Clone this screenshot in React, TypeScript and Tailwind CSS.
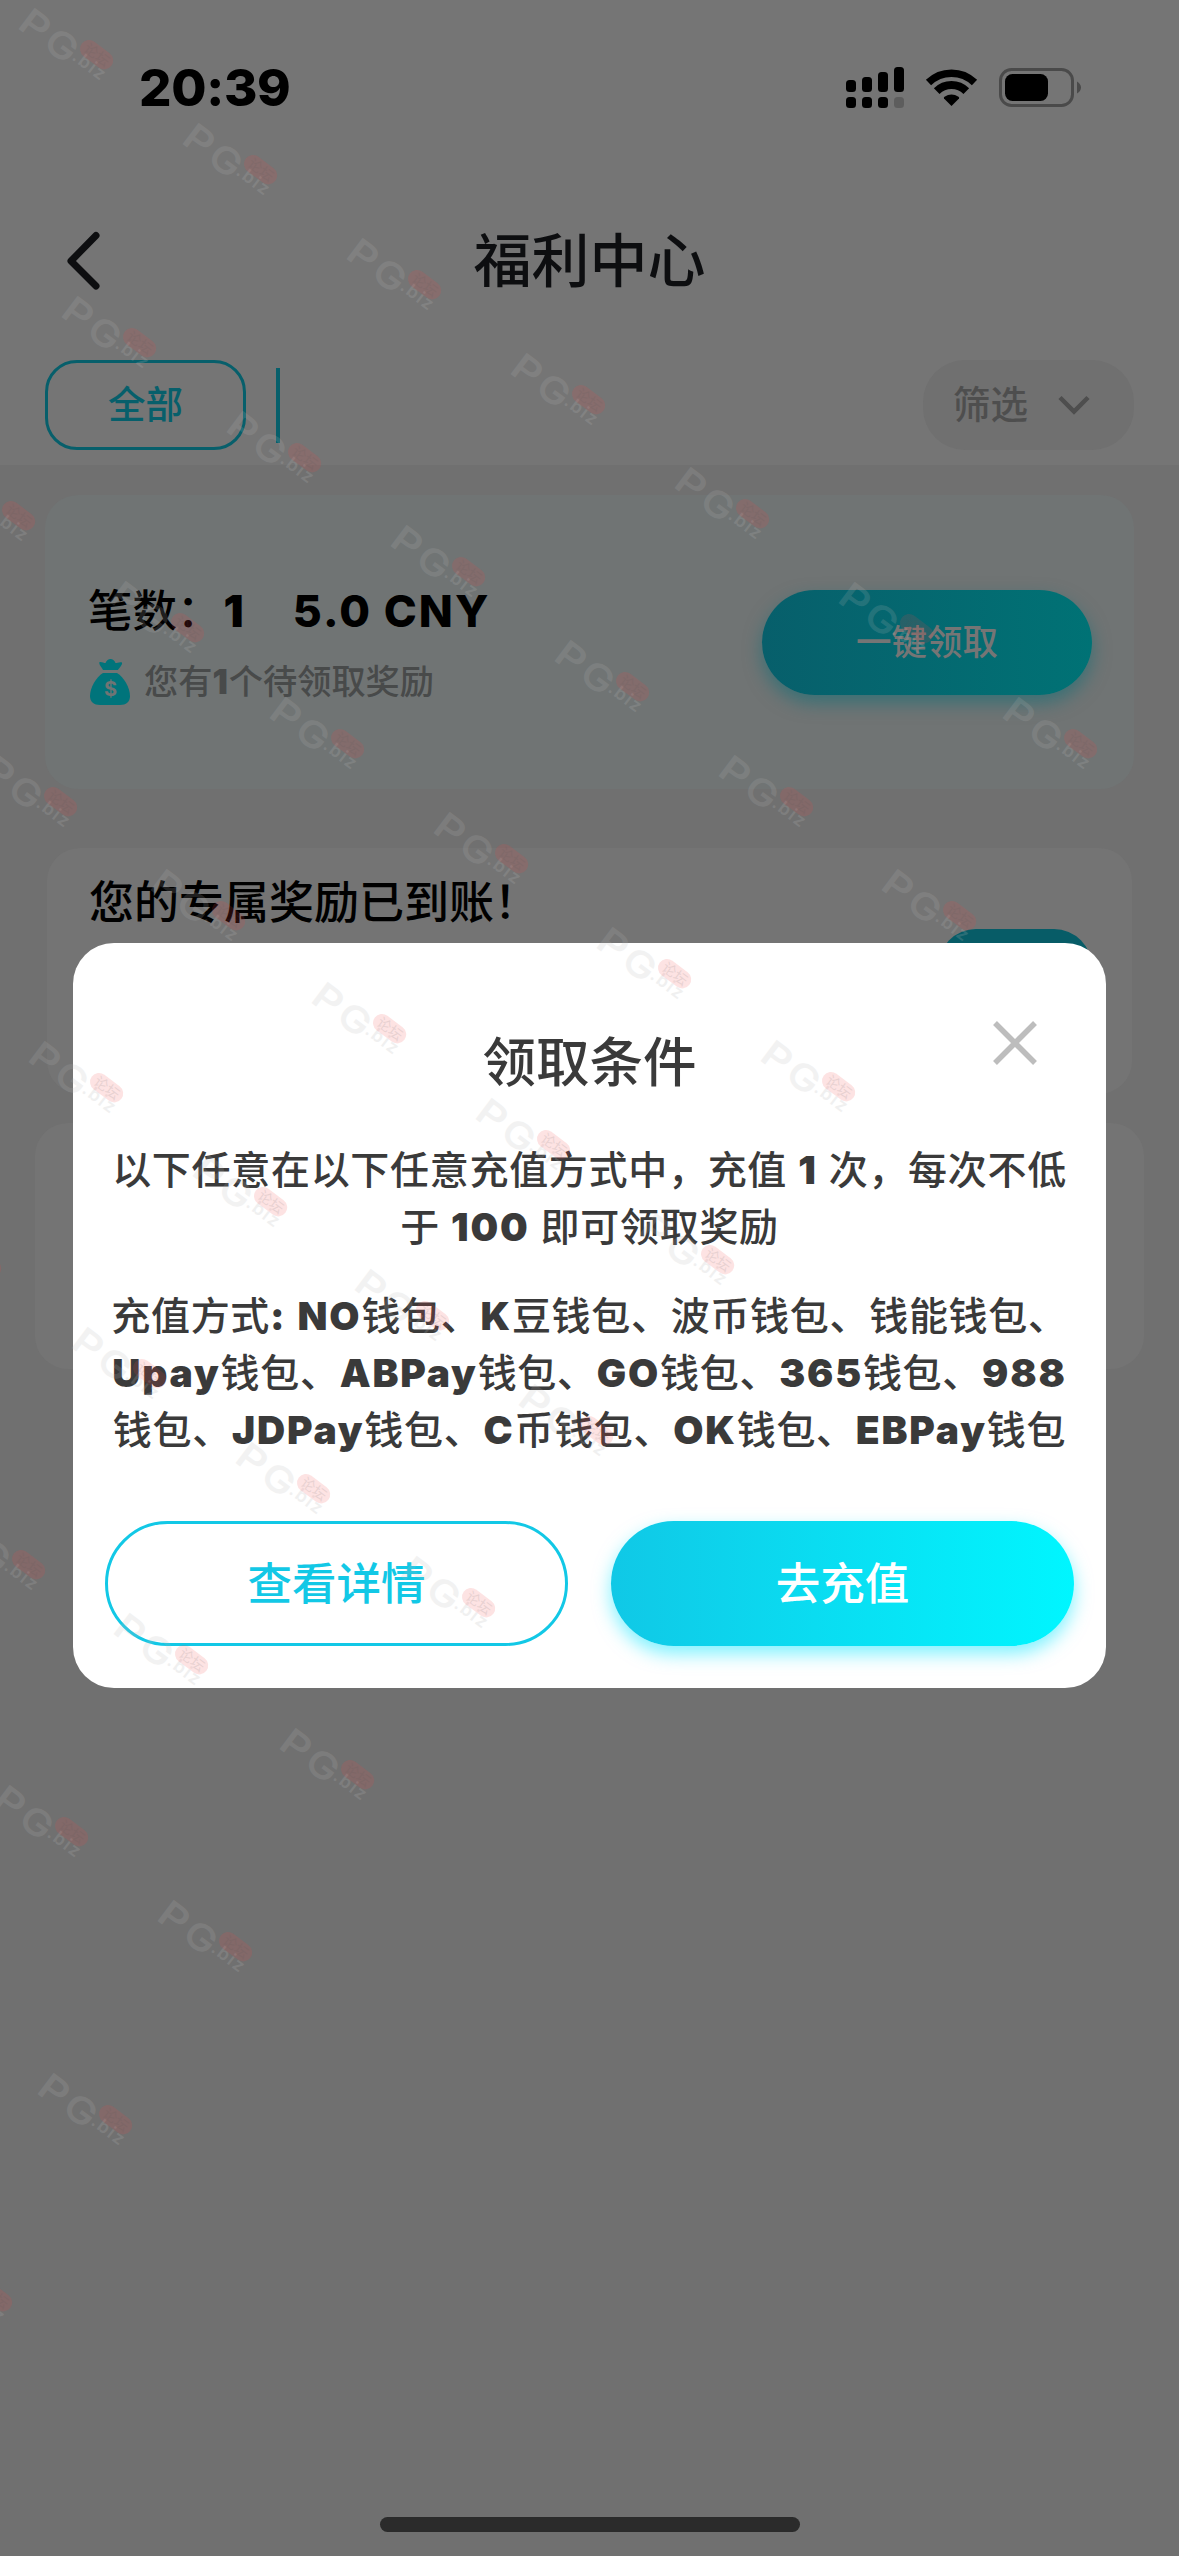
import { Fragment } from 'react';

const WATERMARKS: [number, number][] = [
  [18, 5], [182, 120], [346, 235], [510, 350], [674, 464], [838, 579], [1002, 694],
  [61, 293], [226, 408], [390, 522], [554, 637], [718, 752], [881, 866],
  [-60, 466], [109, 578], [269, 694], [433, 809], [596, 924], [760, 1037],
  [-18, 752], [150, 866], [311, 979], [475, 1095], [639, 1210],
  [28, 1038], [192, 1152], [354, 1266], [518, 1381],
  [-94, 1213], [71, 1324], [235, 1439], [400, 1553],
  [-50, 1515], [113, 1610], [279, 1725],
  [-7, 1782], [157, 1897], [37, 2070], [-83, 2247],
];

const CONDITION_LINES = [
  '以下任意在以下任意充值方式中，充值 1 次，每次不低',
  '于 100 即可领取奖励',
];

const METHOD_LINES = [
  '充值方式: NO钱包、K豆钱包、波币钱包、钱能钱包、',
  'Upay钱包、ABPay钱包、GO钱包、365钱包、988',
  '钱包、JDPay钱包、C币钱包、OK钱包、EBPay钱包',
];

// latin runs are heavier and wider than the CJK text around them
function Mixed({ text }: { text: string }) {
  return (
    <>
      {text.split(/([A-Za-z0-9:.]+)/).map((part, i) =>
        i % 2 ? (
          <span key={i} className="font-black tracking-[1.8px]">{part}</span>
        ) : (
          <Fragment key={i}>{part}</Fragment>
        )
      )}
    </>
  );
}

function StatusBar() {
  return (
    <div className="flex h-[176px] shrink-0 justify-between pl-[139px] pr-[98px]">
      <div className="pt-[57px] text-[51px] leading-[62px] font-extrabold tracking-[-.3px] text-black">20:39</div>
      <svg className="mt-[60px] h-[54px] w-[242px]" viewBox="0 0 242 54">
        <rect x="7" y="20" width="10" height="12" rx="3.5" />
        <rect x="23" y="17" width="10" height="15" rx="3.5" />
        <rect x="39" y="12" width="10" height="20" rx="3.5" />
        <rect x="55" y="7" width="10" height="25" rx="3.5" />
        <rect x="7" y="37" width="10" height="11" rx="3.5" />
        <rect x="23" y="37" width="10" height="11" rx="3.5" />
        <rect x="39" y="37" width="10" height="11" rx="3.5" />
        <rect x="55" y="37" width="10" height="11" rx="3.5" opacity=".2" />
        <path d="M89.5 22.5A33 33 0 0 1 135.5 22.5" fill="none" stroke="#000" strokeWidth="7.5" />
        <path d="M97.7 31.2A21 21 0 0 1 127.3 31.2" fill="none" stroke="#000" strokeWidth="8" />
        <path d="M112.5 46L105 38.5Q104.5 37.5 105.5 36.8Q112.5 32 119.5 36.8Q120.5 37.5 120 38.5Z" />
        <rect x="161.5" y="9.5" width="72" height="36" rx="11" fill="none" stroke="#4a4a4a" strokeWidth="3" />
        <rect x="166" y="14" width="43" height="27" rx="7.5" />
        <path d="M238 21.5C240.5 23 242 25 242 27.5S240.5 32 238 33.5Z" fill="#4a4a4a" />
      </svg>
    </div>
  );
}

function MoneyBag() {
  return (
    <svg className="h-[47px] w-[40px]" viewBox="0 0 40 47" fill="#00747b">
      <path d="M9.5 3C11.5 2.5 14 4 15.5 4C16.5 1.5 18.5 0 20.5 0S24.5 1.5 25.5 4C27 4 30 2.5 32 3.5C32.5 6 29.5 8.5 28 11H13C12 8.5 8.5 5.5 9.5 3Z" />
      <path d="M13 14H27C34 18 40 29 40 37C40 43 36 46 30 46H10C4 46 0 43 0 37C0 29 6 18 13 14Z" />
      <text x="20.5" y="37" textAnchor="middle" fontSize="20" fontWeight="700" fill="#707474">$</text>
    </svg>
  );
}

function Watermark({ x, y }: { x: number; y: number }) {
  return (
    <svg className="absolute h-[100px] w-[110px] overflow-visible" style={{ left: x, top: y }} viewBox="0 0 110 100">
      <g transform="translate(0 23) rotate(37)" fill="#b8b8b8" stroke="#b8b8b8" strokeWidth="1.2" opacity=".17" fontSize="35" fontWeight="400">
        <text x="-2" y="0" textLength="28" lengthAdjust="spacingAndGlyphs">P</text>
        <text x="30" y="0" textLength="31" lengthAdjust="spacingAndGlyphs">G</text>
      </g>
      <text transform="translate(53 54) rotate(37)" fill="#b8b8b8" opacity=".2" fontSize="18" fontWeight="600" letterSpacing="1.5">.biz</text>
      <g transform="translate(79 50) rotate(37)">
        <rect x="-19" y="-9" width="37" height="18" rx="9" fill="#f04646" opacity=".15" />
        <text x="0" y="5" textAnchor="middle" fontSize="14" fontWeight="400" fill="#555" opacity=".12">论坛</text>
      </g>
    </svg>
  );
}

function ConditionModal() {
  return (
    <div className="absolute left-[73px] top-[943px] flex h-[745px] w-[1033px] flex-col rounded-[41px] bg-white px-8 pt-20 text-[#3a3a3a]">
      <h2 className="text-center text-[53.5px] leading-[80px] font-medium">领取条件</h2>
      <button className="absolute right-[69px] top-[78px]">
        <svg className="h-[44px] w-[44px]" viewBox="0 0 44 44" stroke="#bdbdbd" strokeWidth="5.5">
          <path d="M2 2L42 42M42 2L2 42" />
        </svg>
      </button>
      <div className="mt-[38px] text-center text-[39px] leading-[57px] font-medium tracking-[.7px] whitespace-nowrap">
        {CONDITION_LINES.map(line => (
          <p key={line}><Mixed text={line} /></p>
        ))}
      </div>
      <div className="mt-[32px] text-center text-[39px] leading-[57px] font-medium tracking-[.7px] whitespace-nowrap">
        {METHOD_LINES.map(line => (
          <p key={line}><Mixed text={line} /></p>
        ))}
      </div>
      <div className="mt-[63px] grid h-[125px] grid-cols-2 gap-[43px] text-[44.5px] font-medium">
        <button className="rounded-full border-3 border-[#12c8e6] pt-[2px] text-[#12c8e6]">查看详情</button>
        <button className="rounded-full bg-linear-to-r from-[#10c8e6] to-[#00f6ff] pt-[2px] text-white shadow-[0_8px_18px_rgba(0,230,255,0.5)]">
          去充值
        </button>
      </div>
    </div>
  );
}

export default function App() {
  return (
    <div className="relative flex h-[2556px] w-[1179px] flex-col overflow-hidden bg-[#707070] font-['Inter','Noto_Sans_CJK_SC',sans-serif]">
      <header className="h-[465px] shrink-0 bg-[#757575]">
        <StatusBar />
        <div className="grid h-[168px] grid-cols-3 items-center px-[64px]">
          <svg className="h-[60px] w-[40px]" viewBox="0 0 40 60" fill="none" stroke="#0d0e10" strokeWidth="7" strokeLinecap="round" strokeLinejoin="round">
            <path d="M32 5.5L7 31L32 56" />
          </svg>
          <h1 className="pt-[2px] text-center text-[58px] font-medium text-[#0d0e10]">福利中心</h1>
        </div>
        <div className="flex h-[122px] items-center justify-between px-[45px]">
          <div className="flex items-center gap-[30px]">
            <button className="h-[90px] w-[201px] rounded-[32px] border-3 border-[#075f6b] text-[37.5px] font-medium text-[#075f6b]">全部</button>
            <div className="h-[75px] w-[4px] bg-[#075f6b]" />
          </div>
          <button className="flex h-[90px] w-[211px] items-center gap-[30px] rounded-[42px] bg-[#707070] pl-[30px] text-[37.5px] font-medium text-[#4e4e4e]">
            筛选
            <svg className="h-[20px] w-[32px]" viewBox="0 0 32 20" fill="none" stroke="#4e4e4e" strokeWidth="4.5">
              <path d="M2 2.5L16 16.5L30 2.5" />
            </svg>
          </button>
        </div>
      </header>

      <main className="pt-[30px]">
        <section className="mx-[45px] flex h-[294px] items-center justify-between rounded-[33px] bg-[#707474] pr-[42px] pl-[43px]">
          <div className="pt-2">
            <div className="flex h-[70px] items-center text-[44.5px] font-medium whitespace-pre text-black">
              笔数：
              <span className="ml-[2px] font-black tracking-[1.2px]">1</span>
              <span className="ml-[48px] font-extrabold tracking-[2px]">5.0 CNY</span>
            </div>
            <div className="flex h-[70px] items-center gap-[14px] pt-[2px] pl-[2px] text-[34.2px] font-medium text-[#484a4a]">
              <MoneyBag />
              <p>您有<span className="font-black tracking-[1px]">1</span>个待领取奖励</p>
            </div>
          </div>
          <button className="h-[105px] w-[330px] rounded-full bg-linear-to-r from-[#075f6b] to-[#007275] pt-[2px] text-[35.5px] font-medium text-[#757575] shadow-[0_8px_18px_rgba(0,110,120,0.5)]">
            一键领取
          </button>
        </section>
        <section className="mx-[47px] mt-[59px] flex h-[246px] justify-between rounded-[33px] bg-[#747474] pr-[40px] pl-[42px]">
          <h3 className="pt-[21px] text-[45px] leading-[68px] font-medium text-black">您的专属奖励已到账！</h3>
          <div className="mt-[81px] h-[90px] w-[154px] rounded-[38px] bg-[#075c67]" />
        </section>
        <section className="mx-[35px] mt-[29px] h-[246px] rounded-[33px] bg-[#747474]" />
      </main>

      <div className="mt-auto mb-[24px] h-[15px] w-[420px] self-center rounded-full bg-[#2b2b2b]" />

      <ConditionModal />
      <div className="pointer-events-none absolute inset-0 overflow-hidden">
        {WATERMARKS.map(([x, y]) => (
          <Watermark key={`${x}-${y}`} x={x} y={y} />
        ))}
      </div>
    </div>
  );
}
